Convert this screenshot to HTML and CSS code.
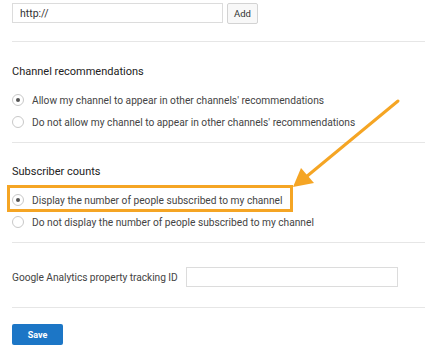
FILE: index.html
```html
<!DOCTYPE html>
<html lang="en">
<head>
    <meta charset="UTF-8">
    <meta name="viewport" content="width=device-width, initial-scale=1.0">
    <title>Channel settings</title>
    <link rel="stylesheet" href="styles.css">
</head>
<body>
    <main class="page">
        <!-- Links -->
        <div class="url-row">
            <input class="text-input url-input" type="text" value="http://">
            <button class="btn-add">Add</button>
        </div>
        <hr class="divider divider-top">

        <!-- Channel recommendations -->
        <section class="group">
            <h2 class="group-title">Channel recommendations</h2>
            <label class="radio-row"><span class="radio checked"></span>Allow my channel to appear in other channels' recommendations</label>
            <label class="radio-row"><span class="radio"></span>Do not allow my channel to appear in other channels' recommendations</label>
        </section>
        <hr class="divider">

        <!-- Subscriber counts -->
        <section class="group">
            <h2 class="group-title">Subscriber counts</h2>
            <label class="radio-row highlight"><span class="radio checked"></span>Display the number of people subscribed to my channel</label>
            <label class="radio-row"><span class="radio"></span>Do not display the number of people subscribed to my channel</label>
        </section>
        <hr class="divider">

        <!-- Analytics -->
        <div class="ga-row">
            <span class="ga-label">Google Analytics property tracking ID</span>
            <input class="text-input ga-input" type="text">
        </div>
        <hr class="divider divider-bottom">

        <button class="btn-save">Save</button>

        <svg class="arrow" width="425" height="352" viewBox="0 0 425 352">
            <line x1="398" y1="101" x2="306" y2="177" stroke="#f5a524" stroke-width="3" stroke-linecap="round"/>
            <polygon points="293,187 301,168 314,183" fill="#f5a524"/>
        </svg>
    </main>
</body>
</html>
```

FILE: styles.css
```css
body {
    margin: 0;
    background: #fff;
    font-family: Roboto, "Noto Sans", Arial, sans-serif;
    font-size: 10.2px;
    color: #333;
}
.page {
    position: relative;
    padding: 3px 0 0 12px;
    height: 349px;
    box-sizing: border-box;
}
.url-row {
    display: flex;
    gap: 4px;
    height: 21px;
}
.text-input {
    box-sizing: border-box;
    height: 20px;
    border: 1px solid #dcdcdc;
    padding: 0 7px;
    font-family: inherit;
    font-size: 10.5px;
    color: #333;
    outline: none;
}
.url-input {
    width: 211px;
}
.btn-add {
    width: 31px;
    height: 21px;
    padding: 0;
    background: #f8f8f8;
    border: 1px solid #d3d3d3;
    border-radius: 2px;
    font-family: inherit;
    font-size: 9.5px;
    color: #333;
}
.divider {
    border: none;
    border-top: 1px solid #e6e6e6;
    margin: 9px 0 0;
}
.divider-top {
    margin-top: 17px;
}
.group {
    display: flex;
    flex-direction: column;
    align-items: flex-start;
    padding-top: 21px;
}
.group:first-of-type {
    padding-top: 22px;
}
.group-title {
    margin: 0 0 9px;
    font-size: 11px;
    font-weight: 400;
    line-height: 16px;
    color: #222;
}
.radio-row {
    position: relative;
    display: inline-flex;
    align-items: center;
    gap: 8px;
    height: 22px;
    color: #444;
}
.radio {
    box-sizing: border-box;
    width: 12px;
    height: 12px;
    border: 1px solid #c8c8c8;
    border-radius: 50%;
    display: flex;
    align-items: center;
    justify-content: center;
}
.radio.checked::before {
    content: "";
    width: 4px;
    height: 4px;
    border-radius: 50%;
    background: #555;
}
.highlight::after {
    content: "";
    position: absolute;
    top: -4px;
    bottom: -1px;
    left: -5px;
    right: -10px;
    border: 3px solid #f5a524;
}
.ga-row {
    display: flex;
    align-items: center;
    gap: 8px;
    margin-top: 24px;
}
.ga-label {
    color: #444;
    letter-spacing: -0.05px;
}
.ga-input {
    width: 212px;
}
.divider-bottom {
    margin-top: 20px;
}
.btn-save {
    margin-top: 16px;
    width: 51px;
    height: 21px;
    padding: 0;
    background: #1c76c6;
    border: none;
    border-radius: 2px;
    color: #fff;
    font-family: inherit;
    font-size: 9px;
    font-weight: 700;
}
.arrow {
    position: absolute;
    left: 0;
    top: 0;
    pointer-events: none;
}
```
